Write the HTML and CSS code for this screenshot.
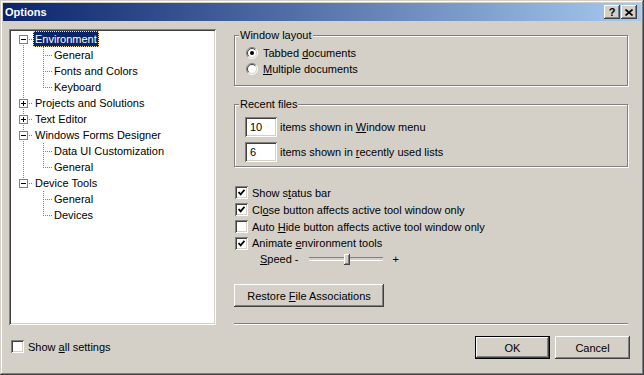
FILE: index.html
```html
<!DOCTYPE html>
<html lang="en">
<head>
    <meta charset="UTF-8">
    <title>Options</title>
    <link rel="stylesheet" href="styles.css">
</head>
<body>
    <div class="window">
        <div class="titlebar">
            <span class="title">Options</span>
            <div class="cap-btns">
                <span class="cap-btn help">?</span>
                <span class="cap-btn close">
                    <svg width="8" height="7" viewBox="0 0 8 7"><path d="M0.5 0.5L7.5 6.5M7.5 0.5L0.5 6.5" stroke="#000" stroke-width="1.6"/></svg>
                </span>
            </div>
        </div>

        <div class="client">
            <div class="left">
                <div class="tree">
                    <div class="row">
                        <span class="cell root-first"><span class="exp"><svg width="7" height="7"><path d="M1 3.5h5" stroke="#000"/></svg></span></span>
                        <span class="label selected">Environment</span>
                    </div>
                    <div class="row"><span class="cell pass"></span><span class="cell child-mid"></span><span class="label">General</span></div>
                    <div class="row"><span class="cell pass"></span><span class="cell child-mid"></span><span class="label">Fonts and Colors</span></div>
                    <div class="row"><span class="cell pass"></span><span class="cell child-last"></span><span class="label">Keyboard</span></div>
                    <div class="row">
                        <span class="cell root-mid"><span class="exp"><svg width="7" height="7"><path d="M1 3.5h5M3.5 1v5" stroke="#000"/></svg></span></span>
                        <span class="label">Projects and Solutions</span>
                    </div>
                    <div class="row">
                        <span class="cell root-mid"><span class="exp"><svg width="7" height="7"><path d="M1 3.5h5M3.5 1v5" stroke="#000"/></svg></span></span>
                        <span class="label">Text Editor</span>
                    </div>
                    <div class="row">
                        <span class="cell root-mid"><span class="exp"><svg width="7" height="7"><path d="M1 3.5h5" stroke="#000"/></svg></span></span>
                        <span class="label">Windows Forms Designer</span>
                    </div>
                    <div class="row"><span class="cell pass"></span><span class="cell child-mid"></span><span class="label">Data UI Customization</span></div>
                    <div class="row"><span class="cell pass"></span><span class="cell child-last"></span><span class="label">General</span></div>
                    <div class="row">
                        <span class="cell root-last"><span class="exp"><svg width="7" height="7"><path d="M1 3.5h5" stroke="#000"/></svg></span></span>
                        <span class="label">Device Tools</span>
                    </div>
                    <div class="row"><span class="cell"></span><span class="cell child-mid"></span><span class="label">General</span></div>
                    <div class="row"><span class="cell"></span><span class="cell child-last"></span><span class="label">Devices</span></div>
                </div>

                <div class="check show-all">
                    <span class="box"></span>
                    <span>Show <u>a</u>ll settings</span>
                </div>
            </div>

            <div class="right">
                <div class="group layout">
                    <span class="group-title">Window layout</span>
                    <div class="options">
                        <div class="radio-row">
                            <svg class="radio" width="12" height="12" viewBox="0 0 12 12">
                                <circle cx="6" cy="6" r="5" fill="#fff"/>
                                <path d="M2.1 9.9A5.5 5.5 0 0 1 9.9 2.1" fill="none" stroke="#808080"/>
                                <path d="M9.9 2.1A5.5 5.5 0 0 1 2.1 9.9" fill="none" stroke="#fff"/>
                                <path d="M2.8 9.2A4.5 4.5 0 0 1 9.2 2.8" fill="none" stroke="#404040"/>
                                <path d="M9.2 2.8A4.5 4.5 0 0 1 2.8 9.2" fill="none" stroke="#D4D0C8"/>
                                <circle cx="6" cy="6" r="2" fill="#000"/>
                            </svg>
                            <span>Tabbed <u>d</u>ocuments</span>
                        </div>
                        <div class="radio-row">
                            <svg class="radio" width="12" height="12" viewBox="0 0 12 12">
                                <circle cx="6" cy="6" r="5" fill="#fff"/>
                                <path d="M2.1 9.9A5.5 5.5 0 0 1 9.9 2.1" fill="none" stroke="#808080"/>
                                <path d="M9.9 2.1A5.5 5.5 0 0 1 2.1 9.9" fill="none" stroke="#fff"/>
                                <path d="M2.8 9.2A4.5 4.5 0 0 1 9.2 2.8" fill="none" stroke="#404040"/>
                                <path d="M9.2 2.8A4.5 4.5 0 0 1 2.8 9.2" fill="none" stroke="#D4D0C8"/>
                            </svg>
                            <span><u>M</u>ultiple documents</span>
                        </div>
                    </div>
                </div>

                <div class="group recent">
                    <span class="group-title">Recent files</span>
                    <div class="fields">
                        <div class="field-row">
                            <span class="textbox">10</span>
                            <span>items shown in <u>W</u>indow menu</span>
                        </div>
                        <div class="field-row">
                            <span class="textbox">6</span>
                            <span>items shown in <u>r</u>ecently used lists</span>
                        </div>
                    </div>
                </div>

                <div class="checks">
                    <div class="check"><span class="box checked"><svg width="7" height="7"><path d="M0.5 3l2.2 2.3L6.5 0.8" fill="none" stroke="#000" stroke-width="1.8"/></svg></span><span>Show s<u>t</u>atus bar</span></div>
                    <div class="check"><span class="box checked"><svg width="7" height="7"><path d="M0.5 3l2.2 2.3L6.5 0.8" fill="none" stroke="#000" stroke-width="1.8"/></svg></span><span>Cl<u>o</u>se button affects active tool window only</span></div>
                    <div class="check"><span class="box"></span><span>Auto <u>H</u>ide button affects active tool window only</span></div>
                    <div class="check short"><span class="box checked"><svg width="7" height="7"><path d="M0.5 3l2.2 2.3L6.5 0.8" fill="none" stroke="#000" stroke-width="1.8"/></svg></span><span>Animate <u>e</u>nvironment tools</span></div>
                    <div class="speed-row">
                        <span><u>S</u>peed -</span>
                        <div class="slider"><span class="thumb"></span></div>
                        <span>+</span>
                    </div>
                </div>

                <button class="btn restore">Restore <u>F</u>ile Associations</button>

                <div class="separator"></div>

                <div class="actions">
                    <button class="btn default">OK</button>
                    <button class="btn">Cancel</button>
                </div>
            </div>
        </div>
    </div>
</body>
</html>
```

FILE: styles.css
```css
* {
    margin: 0;
    padding: 0;
    box-sizing: border-box;
}

body {
    font-family: "Liberation Sans", Arial, sans-serif;
    font-size: 11px;
    color: #000;
    background: #D4D0C8;
}

u {
    text-decoration: underline;
    text-underline-offset: 1px;
}

.window {
    width: 644px;
    height: 375px;
    padding: 3px;
    background: #D4D0C8;
    box-shadow: inset -1px -1px #404040, inset 1px 1px #D4D0C8,
                inset -2px -2px #808080, inset 2px 2px #fff;
    display: flex;
    flex-direction: column;
}

/* title bar */
.titlebar {
    height: 18px;
    flex: none;
    display: flex;
    align-items: center;
    justify-content: space-between;
    padding: 0 4px 0 2px;
    background: linear-gradient(90deg, #0A246A, #A6CAF0);
}

.title {
    color: #fff;
    font-weight: bold;
}

.cap-btns {
    display: flex;
    gap: 1px;
}

.cap-btn {
    width: 16px;
    height: 14px;
    display: flex;
    align-items: center;
    justify-content: center;
    background: #D4D0C8;
    box-shadow: inset -1px -1px #404040, inset 1px 1px #fff, inset -2px -2px #808080;
    font-weight: bold;
    font-size: 11px;
    line-height: 14px;
}

.cap-btn svg {
    display: block;
    margin-left: -1px;
}

/* client area */
.client {
    flex: 1;
    display: flex;
    gap: 18px;
    padding: 8px 10px 0 6px;
}

.left {
    width: 207px;
    flex: none;
}

.tree {
    height: 296px;
    background: #fff;
    padding: 2px 2px 2px 5px;
    box-shadow: inset 1px 1px #808080, inset -1px -1px #fff,
                inset 2px 2px #404040, inset -2px -2px #D4D0C8;
}

.row {
    height: 16px;
    display: flex;
}

.cell {
    width: 19px;
    height: 16px;
    flex: none;
    padding: 4px 0 0 5px;
}

.cell.pass {
    background: repeating-linear-gradient(#808080 0 1px, transparent 1px 2px) 9px 0 / 1px 16px no-repeat;
}

.cell.root-first {
    background:
        repeating-linear-gradient(#808080 0 1px, transparent 1px 2px) 9px 8px / 1px 8px no-repeat,
        repeating-linear-gradient(90deg, #808080 0 1px, transparent 1px 2px) 9px 8px / 10px 1px no-repeat;
}

.cell.root-mid {
    background:
        repeating-linear-gradient(#808080 0 1px, transparent 1px 2px) 9px 0 / 1px 16px no-repeat,
        repeating-linear-gradient(90deg, #808080 0 1px, transparent 1px 2px) 9px 8px / 10px 1px no-repeat;
}

.cell.root-last {
    background:
        repeating-linear-gradient(#808080 0 1px, transparent 1px 2px) 9px 0 / 1px 8px no-repeat,
        repeating-linear-gradient(90deg, #808080 0 1px, transparent 1px 2px) 9px 8px / 10px 1px no-repeat;
}

.cell.child-mid {
    background:
        repeating-linear-gradient(#808080 0 1px, transparent 1px 2px) 10px 0 / 1px 16px no-repeat,
        repeating-linear-gradient(90deg, #808080 0 1px, transparent 1px 2px) 10px 8px / 9px 1px no-repeat;
}

.cell.child-last {
    background:
        repeating-linear-gradient(#808080 0 1px, transparent 1px 2px) 10px 0 / 1px 9px no-repeat,
        repeating-linear-gradient(90deg, #808080 0 1px, transparent 1px 2px) 10px 8px / 9px 1px no-repeat;
}

.exp {
    display: block;
    width: 9px;
    height: 9px;
    background: #fff;
    border: 1px solid #808080;
}

.exp svg {
    display: block;
}

.label {
    height: 16px;
    line-height: 16px;
    padding: 0 2px;
    white-space: nowrap;
}

.label.selected {
    background: #0A246A;
    color: #fff;
    outline: 1px dotted #F5DB95;
    outline-offset: -1px;
}

/* checkboxes */
.check {
    height: 17px;
    display: flex;
    align-items: center;
    gap: 4px;
    white-space: nowrap;
}

.check.short {
    height: 16px;
}

.box {
    width: 13px;
    height: 13px;
    flex: none;
    background: #fff;
    display: flex;
    align-items: center;
    justify-content: center;
    box-shadow: inset 1px 1px #808080, inset -1px -1px #fff,
                inset 2px 2px #404040, inset -2px -2px #D4D0C8;
}

.box svg {
    display: block;
}

.show-all {
    margin: 13px 0 0 2px;
}

/* right side */
.right {
    width: 396px;
    flex: none;
}

.group {
    width: 394px;
    border: 1px solid #808080;
    box-shadow: inset 1px 1px #fff, 1px 1px #fff;
}

.group.layout {
    margin-top: 6px;
}

.group.recent {
    margin-top: 18px;
}

.group-title {
    display: block;
    width: fit-content;
    height: 13px;
    line-height: 13px;
    margin: -7px 0 0 4px;
    padding: 0 1px;
    background: #D4D0C8;
}

.options {
    padding: 3px 0 8px 11px;
}

.radio-row {
    height: 16px;
    display: flex;
    align-items: center;
    gap: 5px;
}

.radio {
    display: block;
    flex: none;
}

.fields {
    padding: 6px 0 4px 10px;
    display: flex;
    flex-direction: column;
    gap: 5px;
}

.field-row {
    display: flex;
    align-items: center;
    gap: 3px;
}

.textbox {
    width: 32px;
    height: 20px;
    line-height: 20px;
    padding-left: 5px;
    background: #fff;
    box-shadow: inset 1px 1px #808080, inset -1px -1px #fff,
                inset 2px 2px #404040, inset -2px -2px #D4D0C8;
}

.checks {
    margin: 17px 0 0 1px;
}

.speed-row {
    height: 16px;
    display: flex;
    align-items: center;
    padding-left: 25px;
    gap: 10px;
}

.slider {
    position: relative;
    width: 74px;
    height: 11px;
    display: flex;
    align-items: center;
}

.slider::before {
    content: "";
    display: block;
    width: 100%;
    height: 2px;
    border-top: 1px solid #808080;
    border-bottom: 1px solid #fff;
}

.thumb {
    position: absolute;
    left: 35px;
    top: 0;
    width: 6px;
    height: 11px;
    background: #D4D0C8;
    box-shadow: inset -1px -1px #404040, inset 1px 1px #fff, inset -2px -2px #808080;
}

.btn {
    font: inherit;
    height: 23px;
    background: #D4D0C8;
    border: none;
    color: #000;
    box-shadow: inset -1px -1px #404040, inset 1px 1px #fff, inset -2px -2px #808080;
}

.btn.restore {
    display: block;
    width: 150px;
    margin-top: 17px;
}

.separator {
    width: 394px;
    height: 2px;
    margin-top: 16px;
    border-top: 1px solid #808080;
    border-bottom: 1px solid #fff;
}

.actions {
    margin-top: 11px;
    display: flex;
    justify-content: flex-end;
    gap: 5px;
}

.actions .btn {
    width: 75px;
}

.btn.default {
    box-shadow: inset 0 0 0 1px #000, inset -2px -2px #404040,
                inset 2px 2px #fff, inset -3px -3px #808080;
}
```
